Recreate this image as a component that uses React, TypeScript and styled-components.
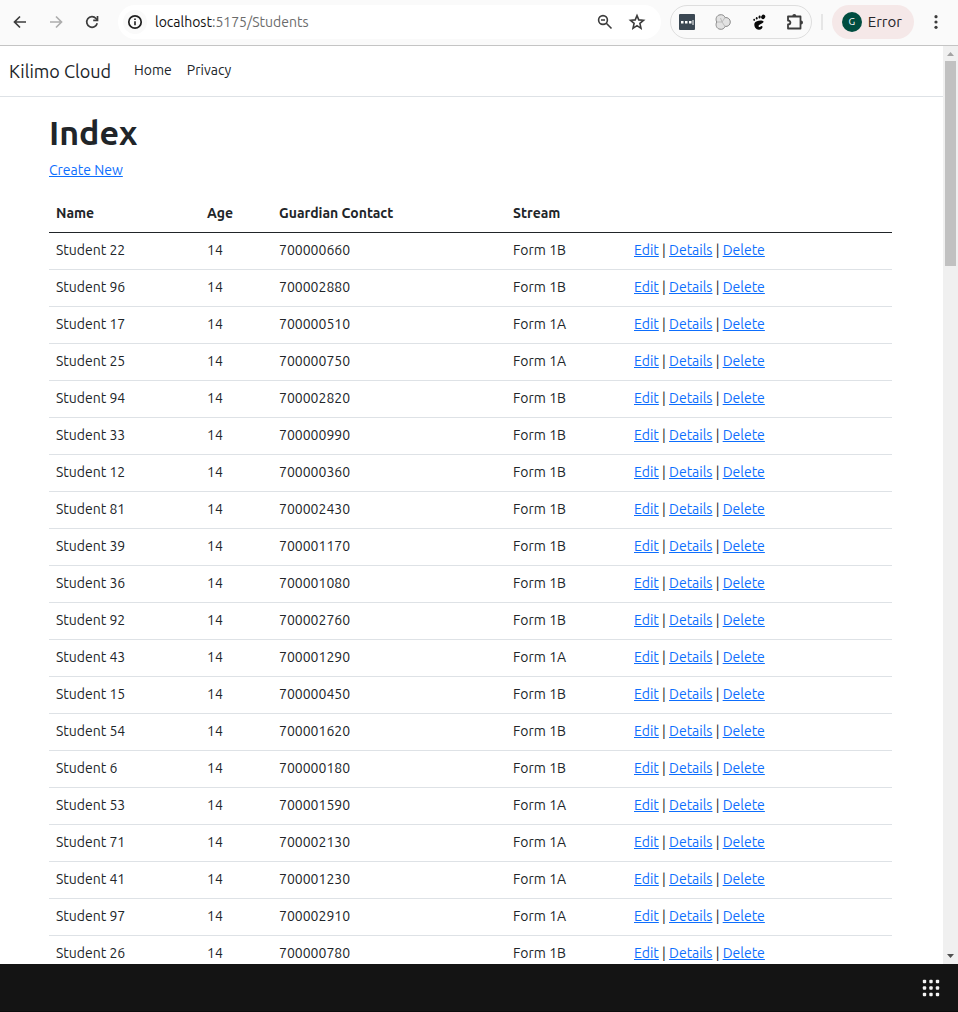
import React from "react";
import styled, { createGlobalStyle } from "styled-components";

const GlobalStyle = createGlobalStyle`
  *, *::before, *::after { box-sizing: border-box; }
  body {
    margin: 0;
    background: #fff;
    color: #212529;
    font: 14px/22px "Ubuntu", "Noto Sans", sans-serif;
  }
`;

const Window = styled.div`
  display: flex;
  flex-direction: column;
  height: 100vh;
  overflow: hidden;
`;

const Toolbar = styled.header`
  display: flex;
  flex: none;
  align-items: center;
  height: 46px;
  padding: 0 10px 2px 8px;
  background: #fafafa;
  border-bottom: 1px solid #c4c4c4;
`;

const IconButton = styled.button<{ $faded?: boolean }>`
  display: flex;
  flex: none;
  align-items: center;
  justify-content: center;
  width: 24px;
  height: 24px;
  padding: 0;
  border: 0;
  background: none;
  color: ${(p) => (p.$faded ? "#adadad" : "#3c3c3c")};
`;

const NavButtons = styled.div`
  display: flex;
  gap: 12px;
`;

const AddressBar = styled.div`
  display: flex;
  flex: 1;
  align-items: center;
  height: 34px;
  margin-left: 14px;
  padding: 0 12px 0 5px;
  border-radius: 17px;
  background: #fff;
`;

const SiteInfo = styled(IconButton)`
  border-radius: 50%;
  background: #fafafa;
  color: #1f1f1f;
`;

const Address = styled.div`
  flex: 1;
  margin-left: 8px;
  color: #111;
`;

const AddressPath = styled.span`
  color: #6b6b6b;
`;

const AddressActions = styled.div`
  display: flex;
  gap: 8px;
`;

const Extensions = styled.div`
  display: flex;
  align-items: center;
  gap: 12px;
  height: 34px;
  margin-left: 9px;
  padding: 0 4px;
  border: 1px solid #dedede;
  border-radius: 17px;
`;

const Divider = styled.span`
  width: 2px;
  height: 16px;
  margin: 0 9px;
  background: #e6e6e6;
`;

const Profile = styled.button`
  display: flex;
  align-items: center;
  gap: 6px;
  height: 34px;
  padding: 0 12px 0 10px;
  border: 0;
  border-radius: 17px;
  background: #f5e8e8;
  color: #26262a;
  font: inherit;
  font-size: 15px;
`;

const Avatar = styled.span`
  width: 20px;
  height: 20px;
  border-radius: 50%;
  background: #004d40;
  color: #fff;
  font-size: 10px;
  line-height: 20px;
  text-align: center;
`;

const MenuButton = styled(IconButton)`
  margin-left: 10px;
`;

const Viewport = styled.div`
  display: flex;
  flex: 1;
  min-height: 0;
`;

const Page = styled.div`
  flex: 1;
  overflow: hidden;
`;

const Navbar = styled.nav`
  display: flex;
  align-items: flex-start;
  height: 51px;
  padding: 13px 9px 0;
  border-bottom: 1px solid #dee2e6;
`;

const Brand = styled.a`
  margin-right: 23px;
  color: #212529;
  font-size: 18px;
  line-height: 24px;
  text-decoration: none;
`;

const NavLink = styled.a`
  margin-right: 15px;
  color: #212529;
  text-decoration: none;
`;

const Content = styled.main`
  width: 90%;
  max-width: 845px;
  margin: 0 auto;
  padding: 14px 2px 0 0;
`;

const Title = styled.h1`
  margin: 0 0 6px;
  font-size: 34px;
  font-weight: 600;
  line-height: 42px;
`;

const Link = styled.a`
  color: #0d6efd;
  text-decoration: underline;
`;

const CreateLine = styled.p`
  margin: 0 0 14px;
`;

const Table = styled.table`
  width: 100%;
  border-collapse: collapse;
  table-layout: fixed;
`;

const Column = styled.col<{ $width?: number }>`
  width: ${(p) => (p.$width ? `${p.$width}px` : "auto")};
`;

const HeadCell = styled.th`
  height: 37px;
  padding: 0 7px;
  border-bottom: 1px solid #212529;
  text-align: left;
  font-weight: 700;
`;

const Cell = styled.td`
  height: 37px;
  padding: 0 7px 2px;
  border-bottom: 1px solid #dee2e6;
  white-space: nowrap;
`;

const Scrollbar = styled.div`
  display: flex;
  flex: none;
  flex-direction: column;
  justify-content: space-between;
  width: 15px;
  background: #f0f0f0;
`;

const ScrollTop = styled.div`
  display: flex;
  flex-direction: column;
  align-items: center;
  height: 24%;
`;

const Arrow = styled.svg`
  display: block;
  flex: none;
  width: 15px;
  height: 15px;
`;

const Thumb = styled.div`
  flex: 1;
  width: 11px;
  background: #c1c1c1;
`;

const Taskbar = styled.footer`
  display: flex;
  flex: none;
  align-items: center;
  justify-content: flex-end;
  height: 48px;
  padding-right: 15px;
  background: #141414;
  border-bottom: 1px solid #0c0c0c;
`;

const columns = [
  { label: "Name", width: 151 },
  { label: "Age", width: 72 },
  { label: "Guardian Contact", width: 234 },
  { label: "Stream", width: 121 },
  { label: "" },
];

const students: [number, string, string][] = [
  [22, "700000660", "1B"],
  [96, "700002880", "1B"],
  [17, "700000510", "1A"],
  [25, "700000750", "1A"],
  [94, "700002820", "1B"],
  [33, "700000990", "1B"],
  [12, "700000360", "1B"],
  [81, "700002430", "1B"],
  [39, "700001170", "1B"],
  [36, "700001080", "1B"],
  [92, "700002760", "1B"],
  [43, "700001290", "1A"],
  [15, "700000450", "1B"],
  [54, "700001620", "1B"],
  [6, "700000180", "1B"],
  [53, "700001590", "1A"],
  [71, "700002130", "1A"],
  [41, "700001230", "1A"],
  [97, "700002910", "1A"],
  [26, "700000780", "1B"],
];

const ArrowIcon = ({ flip }: { flip?: boolean }) => (
  <svg width="16" height="16" viewBox="0 0 16 16" fill="none" stroke="currentColor" strokeWidth="1.7">
    <path d={flip ? "M2 8h11.5M8 2.5 13.5 8 8 13.5" : "M14 8H2.5M8 2.5 2.5 8 8 13.5"} />
  </svg>
);

const ReloadIcon = () => (
  <svg width="16" height="16" viewBox="0 0 16 16" fill="none" stroke="currentColor" strokeWidth="1.7">
    <path d="M13.2 9.2A5.3 5.3 0 1 1 12 4.5l1.3 1.4" />
    <path d="M13.5 2v4.3H9.2" />
  </svg>
);

const InfoIcon = () => (
  <svg width="16" height="16" viewBox="0 0 16 16" fill="none" stroke="currentColor">
    <circle cx="8" cy="8" r="6.2" strokeWidth="1.7" />
    <path d="M8 7.2v4M8 4.6v1.5" strokeWidth="1.6" />
  </svg>
);

const ZoomOutIcon = () => (
  <svg width="16" height="16" viewBox="0 0 16 16" fill="none" stroke="currentColor" strokeWidth="1.6">
    <circle cx="6" cy="6" r="4.4" />
    <path d="m9.3 9.3 5.2 5.2M4 6h4" />
  </svg>
);

const StarIcon = () => (
  <svg width="18" height="18" viewBox="0 0 18 18" fill="none" stroke="currentColor" strokeWidth="1.6">
    <path d="m9 2.6 1.8 4.3 4.7.4-3.6 3.1 1.1 4.9L9 12.700l-4 2.600 1.100-4.900-3.600-3.100 4.700-.4z" />
  </svg>
);

const PasswordIcon = () => (
  <svg width="16" height="16" viewBox="0 0 16 16">
    <rect width="16" height="16" rx="1" fill="#3b4853" />
    <path d="M2 7h2.5v2.5H2zM6 7h2.5v2.5H6zM10 7h2.5v2.5H10zM13.5 6h1v5h-1z" fill="#fff" />
  </svg>
);

const BlobIcon = () => (
  <svg width="16" height="16" viewBox="0 0 16 16" stroke="#8a8a8a">
    <path
      d="M5 .8c2.4-.5 4.4.7 5 2.8 2.9-.5 5.3 1.6 5.3 4.4s-2.4 4.9-5.3 4.4c-.6 2.1-2.6 3.3-5 2.8C1.500 14.700.2 11.200 1.700 8 .2 4.800 1.500 1.300 5 .8z"
      fill="#e2e2e2"
    />
    <path d="M1.700 8H7l3-4.400M7 8l3 4.400M7 8 5.500 4" fill="none" stroke="#bcbcbc" />
  </svg>
);

const FootIcon = () => (
  <svg width="14" height="16" viewBox="0 0 14 16" fill="#0a0a0a">
    <ellipse cx="11.200" cy="2.900" rx="1.900" ry="2.300" transform="rotate(35 11.200 2.900)" />
    <ellipse cx="7.600" cy="3" rx="1.100" ry="1.500" transform="rotate(10 7.600 3)" />
    <ellipse cx="4.700" cy="4.200" rx=".9" ry="1.200" />
    <ellipse cx="2.200" cy="5.800" rx=".9" ry="1.100" transform="rotate(-15 2.200 5.800)" />
    <path d="M11.500 7.200C10 6 3.600 6.300 2.500 9.300c-.9 3.200 1.500 6.500 4.500 6.500 2.300 0 3.700-1.600 3.500-3-.2-1.200-1.600-.8-2.200 0-.7.700-2 .2-1.700-1 .4-1.700 5.200-2.100 4.900-4.600z" />
  </svg>
);

const PuzzleIcon = () => (
  <svg width="18" height="18" viewBox="0 0 18 18">
    <path d="M2 3.500h12.500v12H2v-4c3.200 0 3.200-4 0-4z" fill="none" stroke="currentColor" strokeWidth="1.8" strokeLinejoin="round" />
    <path d="M6.300 3a2 2 0 0 1 4 0zM15 7.500a2 2 0 0 1 0 4z" fill="currentColor" />
  </svg>
);

const DotsIcon = () => (
  <svg width="16" height="16" viewBox="0 0 16 16" fill="currentColor">
    <circle cx="8" cy="2.7" r="1.6" />
    <circle cx="8" cy="8" r="1.6" />
    <circle cx="8" cy="13.3" r="1.6" />
  </svg>
);

const GridIcon = () => (
  <svg width="18" height="18" viewBox="0 0 18 18" fill="#f4f4f4">
    {[2.5, 9, 15.5].map((y) =>
      [2.5, 9, 15.5].map((x) => <rect key={`${x}-${y}`} x={x - 1.7} y={y - 1.7} width="3.4" height="3.4" rx="1" />)
    )}
  </svg>
);

export default function App() {
  return (
    <Window>
      <GlobalStyle />
      <Toolbar>
        <NavButtons>
          <IconButton aria-label="Back"><ArrowIcon /></IconButton>
          <IconButton aria-label="Forward" $faded><ArrowIcon flip /></IconButton>
          <IconButton aria-label="Reload"><ReloadIcon /></IconButton>
        </NavButtons>
        <AddressBar>
          <SiteInfo aria-label="Site information"><InfoIcon /></SiteInfo>
          <Address>localhost<AddressPath>:5175/Students</AddressPath></Address>
          <AddressActions>
            <IconButton aria-label="Zoom"><ZoomOutIcon /></IconButton>
            <IconButton aria-label="Bookmark"><StarIcon /></IconButton>
          </AddressActions>
        </AddressBar>
        <Extensions>
          <IconButton aria-label="Password manager"><PasswordIcon /></IconButton>
          <IconButton aria-label="Extension"><BlobIcon /></IconButton>
          <IconButton aria-label="GNOME integration"><FootIcon /></IconButton>
          <IconButton aria-label="Extensions"><PuzzleIcon /></IconButton>
        </Extensions>
        <Divider />
        <Profile><Avatar>G</Avatar>Error</Profile>
        <MenuButton aria-label="Menu"><DotsIcon /></MenuButton>
      </Toolbar>
      <Viewport>
        <Page>
          <Navbar>
            <Brand href="#">Kilimo Cloud</Brand>
            <NavLink href="#">Home</NavLink>
            <NavLink href="#">Privacy</NavLink>
          </Navbar>
          <Content>
            <Title>Index</Title>
            <CreateLine><Link href="#">Create New</Link></CreateLine>
            <Table>
              <colgroup>
                {columns.map((c) => <Column key={c.label} $width={c.width} />)}
              </colgroup>
              <thead>
                <tr>{columns.map((c) => <HeadCell key={c.label}>{c.label}</HeadCell>)}</tr>
              </thead>
              <tbody>
                {students.map(([id, contact, stream]) => (
                  <tr key={id}>
                    <Cell>Student {id}</Cell>
                    <Cell>14</Cell>
                    <Cell>{contact}</Cell>
                    <Cell>Form {stream}</Cell>
                    <Cell>
                      <Link href="#">Edit</Link> | <Link href="#">Details</Link> | <Link href="#">Delete</Link>
                    </Cell>
                  </tr>
                ))}
              </tbody>
            </Table>
          </Content>
        </Page>
        <Scrollbar aria-hidden="true">
          <ScrollTop>
            <Arrow viewBox="0 0 15 15"><path d="M4 10h7L7.500 6z" fill="#a3a3a3" /></Arrow>
            <Thumb />
          </ScrollTop>
          <Arrow viewBox="0 0 15 15"><path d="M4 5h7L7.500 9z" fill="#505050" /></Arrow>
        </Scrollbar>
      </Viewport>
      <Taskbar>
        <IconButton aria-label="Show applications"><GridIcon /></IconButton>
      </Taskbar>
    </Window>
  );
}
